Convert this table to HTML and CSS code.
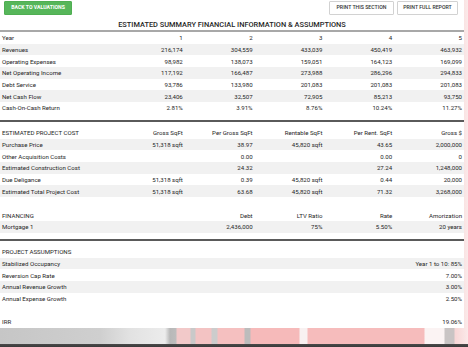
FILE: index.html
```html
<!DOCTYPE html>
<html lang="en">
<head>
<meta charset="utf-8">
<title>Estimated Summary Financial Information &amp; Assumptions</title>
<link rel="stylesheet" href="styles.css">
</head>
<body>
<div class="panel">
  <div class="toolbar">
    <button class="btn btn-green">BACK TO VALUATIONS</button>
    <div class="print-group">
      <button class="btn btn-light">PRINT THIS SECTION</button>
      <button class="btn btn-light">PRINT FULL REPORT</button>
    </div>
  </div>
  <h1 class="title">ESTIMATED SUMMARY FINANCIAL INFORMATION &amp; ASSUMPTIONS</h1>

  <table class="grid">
    <colgroup><col class="c-label"><col><col><col><col><col></colgroup>
    <thead>
      <tr><th>Year</th><th>1</th><th>2</th><th>3</th><th>4</th><th>5</th></tr>
    </thead>
    <tbody>
      <tr><td>Revenues</td><td>216,174</td><td>304,559</td><td>433,039</td><td>450,419</td><td>463,932</td></tr>
      <tr><td>Operating Expenses</td><td>98,982</td><td>138,073</td><td>159,051</td><td>164,123</td><td>169,099</td></tr>
      <tr><td>Net Operating Income</td><td>117,192</td><td>166,487</td><td>273,988</td><td>286,296</td><td>294,833</td></tr>
      <tr><td>Debt Service</td><td>93,786</td><td>133,980</td><td>201,083</td><td>201,083</td><td>201,083</td></tr>
      <tr><td>Net Cash Flow</td><td>23,406</td><td>32,507</td><td>72,905</td><td>85,213</td><td>93,750</td></tr>
      <tr><td>Cash-On-Cash Return</td><td>2.81%</td><td>3.91%</td><td>8.76%</td><td>10.24%</td><td>11.27%</td></tr>
    </tbody>
  </table>

  <hr class="sep">

  <table class="grid">
    <colgroup><col class="c-label"><col><col><col><col><col></colgroup>
    <thead>
      <tr><th>ESTIMATED PROJECT COST</th><th>Gross SqFt</th><th>Per Gross SqFt</th><th>Rentable SqFt</th><th>Per Rent. SqFt</th><th>Gross $</th></tr>
    </thead>
    <tbody>
      <tr><td>Purchase Price</td><td>51,318 sqft</td><td>38.97</td><td>45,820 sqft</td><td>43.65</td><td>2,000,000</td></tr>
      <tr><td>Other Acquisition Costs</td><td></td><td>0.00</td><td></td><td>0.00</td><td>0</td></tr>
      <tr><td>Estimated Construction Cost</td><td></td><td>24.32</td><td></td><td>27.24</td><td>1,248,000</td></tr>
      <tr><td>Due Deligance</td><td>51,318 sqft</td><td>0.39</td><td>45,820 sqft</td><td>0.44</td><td>20,000</td></tr>
      <tr><td>Estimated Total Project Cost</td><td>51,318 sqft</td><td>63.68</td><td>45,820 sqft</td><td>71.32</td><td>3,268,000</td></tr>
    </tbody>
  </table>

  <table class="grid financing">
    <colgroup><col class="c-label"><col><col><col><col><col></colgroup>
    <thead>
      <tr><th colspan="2">FINANCING</th><th>Debt</th><th>LTV Ratio</th><th>Rate</th><th>Amorization</th></tr>
    </thead>
    <tbody>
      <tr><td colspan="2">Mortgage 1</td><td>2,436,000</td><td>75%</td><td>5.50%</td><td>20 years</td></tr>
    </tbody>
  </table>

  <hr class="sep">

  <table class="grid">
    <colgroup><col class="c-label"><col><col><col><col><col></colgroup>
    <thead>
      <tr><th colspan="6">PROJECT ASSUMPTIONS</th></tr>
    </thead>
    <tbody>
      <tr><td colspan="5">Stabilized Occupancy</td><td>Year 1 to 10: 85%</td></tr>
      <tr><td colspan="5">Reversion Cap Rate</td><td>7.00%</td></tr>
      <tr><td colspan="5">Annual Revenue Growth</td><td>3.00%</td></tr>
      <tr><td colspan="5">Annual Expense Growth</td><td>2.50%</td></tr>
    </tbody>
  </table>

  <table class="grid irr">
    <colgroup><col class="c-label"><col><col><col><col><col></colgroup>
    <tbody>
      <tr><td colspan="5">IRR</td><td>19.06%</td></tr>
    </tbody>
  </table>
</div>
</body>
</html>
```

FILE: styles.css
```css
html, body {
  margin: 0;
  padding: 0;
}

body {
  width: 468px;
  height: 347px;
  overflow: hidden;
  font-family: Roboto, "Liberation Sans", Arial, sans-serif;
  color: #262626;
  background:
    linear-gradient(to bottom, transparent 0, transparent 344px, #4a4a4a 344px, #3a3a3a 347px),
    linear-gradient(to right,
      #c6c6c6 0, #cfcfcf 100px, #e2e2e2 130px, #ececec 165px,
      #b8b8b8 170px, #bdbdbd 176px,
      #f2c9c9 177px, #f2c9c9 190px,
      #c9c9c9 191px, #c9c9c9 195px,
      #f3c3c3 196px, #f3c3c3 211px,
      #cccccc 212px, #cccccc 217px,
      #f5c0c0 218px, #f5c0c0 244px,
      #bcbcbc 245px, #bcbcbc 250px,
      #f6baba 251px, #f6baba 299px,
      #f8f1f1 300px, #f8f1f1 307px,
      #f6bcbc 308px, #f6bcbc 424px,
      #fbf3f3 425px, #fbf3f3 444px,
      #c9c4c4 445px, #c9c4c4 454px,
      #f7d6d6 455px, #fbe9e9 468px);
}

.panel {
  width: 464px;
  background: #fff;
  padding-bottom: 1px;
}

/* toolbar */
.toolbar {
  display: flex;
  justify-content: space-between;
  align-items: flex-start;
  padding: 1px 6px 0 4px;
  height: 15px;
}

.print-group {
  display: flex;
  gap: 3px;
}

.btn {
  font-family: Roboto, "Liberation Sans", Arial, sans-serif;
  font-size: 5.2px;
  font-weight: 500;
  height: 14px;
  margin: 0;
  border-radius: 1px;
  cursor: pointer;
  line-height: 1;
  padding: 0;
}

.btn-green {
  width: 68px;
  background: #56b65a;
  border: 1px solid #4fae52;
  color: #fff;
  font-weight: 700;
}

.btn-light {
  background: #fff;
  border: 1px solid #d2d2d2;
  color: #333;
}

.btn-light:first-child {
  width: 65px;
}

.btn-light:last-child {
  width: 61px;
}

/* title */
.title {
  margin: 0;
  padding: 4px 0 1px;
  font-size: 7.4px;
  line-height: 9px;
  font-weight: 500;
  text-align: center;
  color: #262626;
  border-bottom: 2px solid #a8a8a8;
  width: 464px;
}

/* tables */
.grid {
  width: 464px;
  border-collapse: collapse;
  table-layout: fixed;
  font-size: 6.1px;
}

.grid .c-label {
  width: 115px;
}

.grid th,
.grid td {
  height: 11.7px;
  padding: 0 2px;
  line-height: 7px;
  text-align: right;
  font-weight: 400;
  white-space: nowrap;
  overflow: hidden;
  box-sizing: border-box;
  vertical-align: middle;
}

.grid th:first-child,
.grid td:first-child {
  text-align: left;
}

.grid tbody tr:nth-child(odd) {
  background: #f1f1f1;
}

.sep {
  margin: 6px 0 5px;
  border: 0;
  border-top: 2px solid #5a5a5a;
  width: 464px;
  height: 0;
}

.financing {
  margin-top: 12.5px;
}

.irr {
  margin-top: 11.5px;
}

.irr tbody tr:nth-child(odd) {
  background: #fff;
}
```
